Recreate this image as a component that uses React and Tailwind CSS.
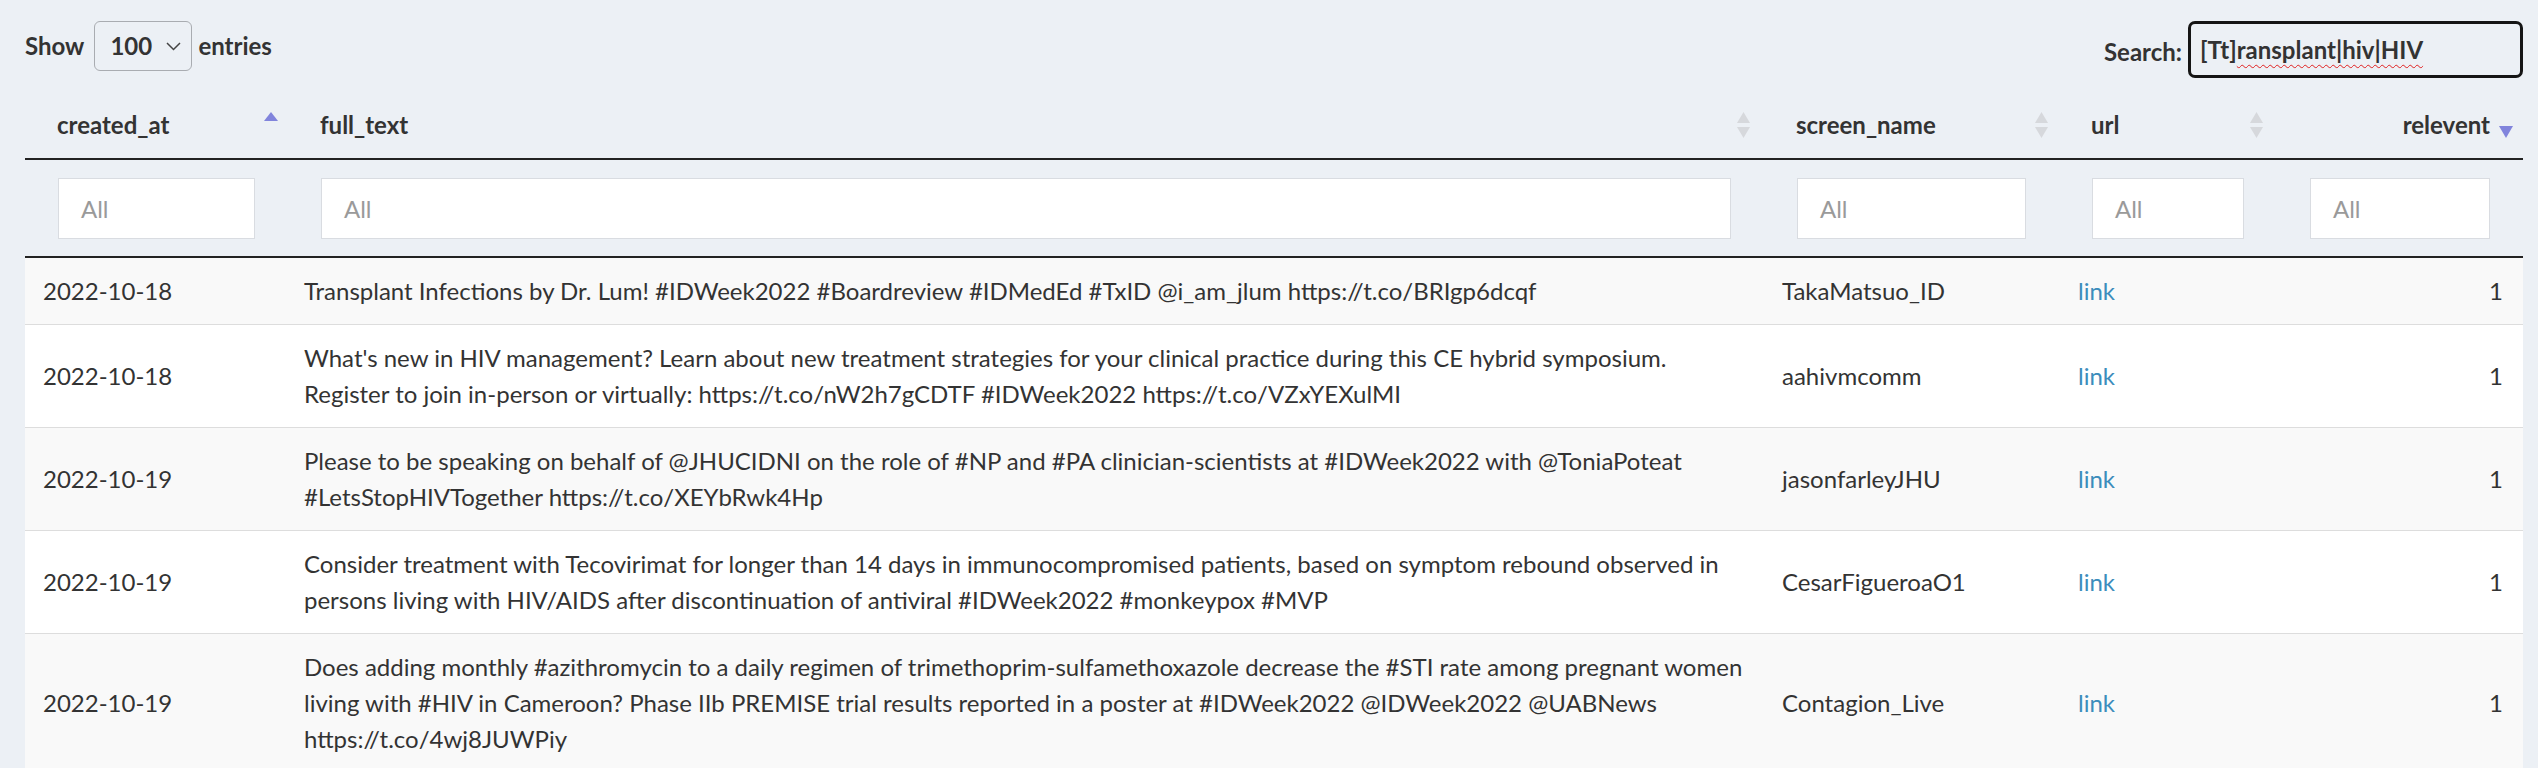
import React from "react";

const FONT = { fontFamily: "Lato, 'Open Sans', sans-serif" };

const rows = [
  {
    date: "2022-10-18",
    text: ["Transplant Infections by Dr. Lum! #IDWeek2022 #Boardreview #IDMedEd #TxID @i_am_jlum https://t.co/BRIgp6dcqf"],
    name: "TakaMatsuo_ID",
  },
  {
    date: "2022-10-18",
    text: [
      "What's new in HIV management? Learn about new treatment strategies for your clinical practice during this CE hybrid symposium.",
      "Register to join in-person or virtually: https://t.co/nW2h7gCDTF #IDWeek2022 https://t.co/VZxYEXulMI",
    ],
    name: "aahivmcomm",
  },
  {
    date: "2022-10-19",
    text: [
      "Please to be speaking on behalf of @JHUCIDNI on the role of #NP and #PA clinician-scientists at #IDWeek2022 with @ToniaPoteat",
      "#LetsStopHIVTogether https://t.co/XEYbRwk4Hp",
    ],
    name: "jasonfarleyJHU",
  },
  {
    date: "2022-10-19",
    text: [
      "Consider treatment with Tecovirimat for longer than 14 days in immunocompromised patients, based on symptom rebound observed in",
      "persons living with HIV/AIDS after discontinuation of antiviral #IDWeek2022 #monkeypox #MVP",
    ],
    name: "CesarFigueroaO1",
  },
  {
    date: "2022-10-19",
    text: [
      "Does adding monthly #azithromycin to a daily regimen of trimethoprim-sulfamethoxazole decrease the #STI rate among pregnant women",
      "living with #HIV in Cameroon? Phase IIb PREMISE trial results reported in a poster at #IDWeek2022 @IDWeek2022 @UABNews",
      "https://t.co/4wj8JUWPiy",
    ],
    name: "Contagion_Live",
  },
];

function SortBoth() {
  return (
    <svg width="13" height="26" viewBox="0 0 13 26" className="shrink-0">
      <path d="M6.5 0 L13 11 L0 11 Z" fill="#d6d8dc" />
      <path d="M0 15 L13 15 L6.5 26 Z" fill="#d6d8dc" />
    </svg>
  );
}

function SortAsc() {
  return (
    <svg width="14" height="26" viewBox="0 0 14 26" className="shrink-0">
      <path d="M7 0 L14 9 L0 9 Z" fill="#8184dc" />
    </svg>
  );
}

function SortDesc() {
  return (
    <svg width="14" height="26" viewBox="0 0 14 26" className="shrink-0">
      <path d="M0 14 L14 14 L7 26 Z" fill="#8184dc" />
    </svg>
  );
}

function FilterInput() {
  return (
    <div className="h-[61px] w-full bg-white border border-[#d9dce1] flex items-center pl-[22px] text-[24px] text-[#9a9a9a]">
      All
    </div>
  );
}

export default function App() {
  return (
    <div className="min-h-[768px] w-[2538px] bg-[#ecf0f5] text-[#333]" style={FONT}>
      {/* top controls */}
      <div className="flex items-start justify-between pl-[25px] pr-[15px] pt-[21px] h-[91px]">
        <div className="flex items-center h-[50px] text-[24px] font-bold">
          <span>Show</span>
          <div className="ml-[10px] mr-[6px] w-[98px] h-[50px] rounded-[6px] border border-[#a9acb1] flex items-center pl-[15px] pr-[10px] justify-between">
            <span>100</span>
            <svg width="15" height="9" viewBox="0 0 15 9">
              <path d="M1 1 L7.5 7.5 L14 1" fill="none" stroke="#444" strokeWidth="1.5" />
            </svg>
          </div>
          <span>entries</span>
        </div>
        <div className="flex items-center h-[57px] text-[24px] font-bold">
          <span className="mr-[6px] mt-[4px]">Search:</span>
          <div className="w-[335px] h-[57px] rounded-[7px] border-[3px] border-[#151515] flex items-center pl-[9px] font-bold">
            <span>
              [Tt]
              <span className="underline decoration-wavy decoration-[#e02020] decoration-1 underline-offset-[5px]">
                ransplant|hiv|HIV
              </span>
            </span>
          </div>
        </div>
      </div>

      {/* table */}
      <div className="pl-[25px] pr-[15px]">
        <table className="table-fixed border-collapse w-[2498px] text-[24px]">
          <colgroup>
            <col className="w-[263px]" />
            <col className="w-[1476px]" />
            <col className="w-[295px]" />
            <col className="w-[218px]" />
            <col className="w-[246px]" />
          </colgroup>
          <thead>
            <tr className="h-[68px] border-b-2 border-[#222]">
              <th className="font-bold text-left pl-[32px] pr-[10px] align-middle">
                <div className="flex items-center justify-between">
                  <span>created_at</span>
                  <SortAsc />
                </div>
              </th>
              <th className="font-bold text-left pl-[32px] pr-[14px] align-middle">
                <div className="flex items-center justify-between">
                  <span>full_text</span>
                  <SortBoth />
                </div>
              </th>
              <th className="font-bold text-left pl-[32px] pr-[11px] align-middle">
                <div className="flex items-center justify-between">
                  <span>screen_name</span>
                  <SortBoth />
                </div>
              </th>
              <th className="font-bold text-left pl-[32px] pr-[14px] align-middle">
                <div className="flex items-center justify-between">
                  <span>url</span>
                  <SortBoth />
                </div>
              </th>
              <th className="font-bold text-right pl-[20px] pr-[10px] align-middle">
                <div className="flex items-center justify-end gap-[9px]">
                  <span>relevent</span>
                  <SortDesc />
                </div>
              </th>
            </tr>
            <tr className="border-b-2 border-[#222]">
              <td className="px-[33px] pt-[18px] pb-[17px]"><FilterInput /></td>
              <td className="px-[33px] pt-[18px] pb-[17px]"><FilterInput /></td>
              <td className="px-[33px] pt-[18px] pb-[17px]"><FilterInput /></td>
              <td className="px-[33px] pt-[18px] pb-[17px]"><FilterInput /></td>
              <td className="px-[33px] pt-[18px] pb-[17px]"><FilterInput /></td>
            </tr>
          </thead>
          <tbody>
            {rows.map((r, i) => (
              <tr key={i} className={(i % 2 === 0 ? "bg-[#f9f9f9]" : "bg-white") + " border-b border-[#dddddd]"}>
                <td className="pl-[18px] py-[15px] leading-[36px] align-middle whitespace-nowrap">{r.date}</td>
                <td className="pl-[16px] py-[15px] leading-[36px] align-middle">
                  {r.text.map((t, j) => (
                    <span key={j} className="block whitespace-nowrap">{t}</span>
                  ))}
                </td>
                <td className="pl-[18px] py-[15px] leading-[36px] align-middle whitespace-nowrap">{r.name}</td>
                <td className="pl-[19px] py-[15px] leading-[36px] align-middle">
                  <a className="text-[#3c8dbc]">link</a>
                </td>
                <td className="pr-[20px] py-[15px] leading-[36px] align-middle text-right">1</td>
              </tr>
            ))}
          </tbody>
        </table>
      </div>
    </div>
  );
}
